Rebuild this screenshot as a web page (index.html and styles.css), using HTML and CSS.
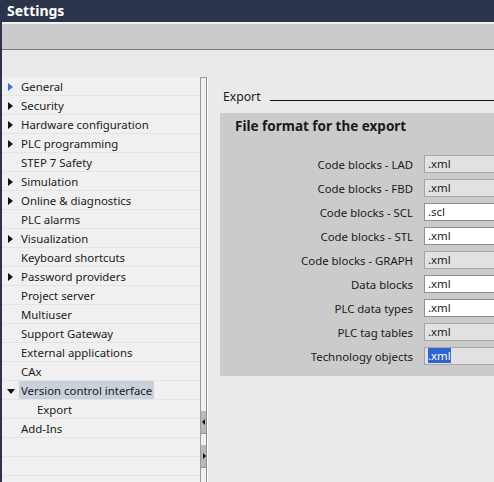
FILE: index.html
```html
<!DOCTYPE html>
<html lang="en">
<head>
    <meta charset="UTF-8">
    <title>Settings</title>
    <link rel="stylesheet" href="styles.css">
</head>
<body>
    <div class="titlebar">Settings</div>
    <div class="toolbar"></div>

    <div class="main">
        <ul class="nav">
            <li><span class="arrow blue"></span>General</li>
            <li><span class="arrow"></span>Security</li>
            <li><span class="arrow"></span>Hardware configuration</li>
            <li><span class="arrow"></span>PLC programming</li>
            <li>STEP 7 Safety</li>
            <li><span class="arrow"></span>Simulation</li>
            <li><span class="arrow"></span>Online &amp; diagnostics</li>
            <li>PLC alarms</li>
            <li><span class="arrow"></span>Visualization</li>
            <li>Keyboard shortcuts</li>
            <li><span class="arrow"></span>Password providers</li>
            <li>Project server</li>
            <li>Multiuser</li>
            <li>Support Gateway</li>
            <li>External applications</li>
            <li>CAx</li>
            <li><span class="arrow down"></span><span class="selected">Version control interface</span></li>
            <li class="sub">Export</li>
            <li>Add-Ins</li>
            <li></li>
            <li></li>
            <li></li>
        </ul>

        <div class="splitter">
            <div class="grip left"></div>
            <div class="grip right"></div>
        </div>

        <div class="content">
            <div class="section-title"><span>Export</span></div>
            <div class="group">
                <div class="group-title">File format for the export</div>
                <div class="row"><label>Code blocks - LAD</label><div class="field disabled">.xml</div></div>
                <div class="row"><label>Code blocks - FBD</label><div class="field disabled">.xml</div></div>
                <div class="row"><label>Code blocks - SCL</label><div class="field">.scl</div></div>
                <div class="row"><label>Code blocks - STL</label><div class="field">.xml</div></div>
                <div class="row"><label>Code blocks - GRAPH</label><div class="field disabled">.xml</div></div>
                <div class="row"><label>Data blocks</label><div class="field">.xml</div></div>
                <div class="row"><label>PLC data types</label><div class="field">.xml</div></div>
                <div class="row"><label>PLC tag tables</label><div class="field disabled">.xml</div></div>
                <div class="row"><label>Technology objects</label><div class="field disabled"><span class="sel">.xml</span></div></div>
            </div>
        </div>
    </div>
</body>
</html>
```

FILE: styles.css
```css
html, body { margin: 0; padding: 0; height: 100%; overflow: hidden; }
body { font-family: "Noto Sans", Arial, sans-serif; font-size: 11.4px; color: #1a1a1a; background: #eaeaea; border-left: 2px solid #2c344c; box-sizing: border-box; display: flex; flex-direction: column; }

.titlebar { height: 22px; line-height: 22px; background: #2c344c; color: #fff; font-weight: bold; font-size: 14px; padding-left: 5px; flex: none; }
.toolbar { height: 25px; background: #cbcbcb; border-top: 2px solid #f2f2f2; border-bottom: 1px solid #7a7a7a; flex: none; }

.main { display: flex; padding-top: 27px; flex: 1; min-height: 0; overflow: hidden; }

.nav { list-style: none; margin: 0; padding: 0; width: 198px; flex: none; }
.nav li { height: 18px; line-height: 20px; padding-left: 19px; background: #f0f0f0; border-bottom: 1px solid #e4e4e4; position: relative; white-space: nowrap; }
.nav li.sub { padding-left: 35px; }
.nav .selected { display: inline-block; height: 18px; background: #c9d1db; padding: 0 2px; margin-left: -2px; }

.arrow { position: absolute; left: 6px; top: 6px; width: 0; height: 0; border-top: 4px solid transparent; border-bottom: 4px solid transparent; border-left: 5px solid #111; }
.arrow.blue { border-left-color: #3b6fd6; }
.arrow.down { left: 5px; top: 8px; border-left: 4px solid transparent; border-right: 4px solid transparent; border-top: 5px solid #111; border-bottom: 0; }

.splitter { width: 5px; flex: none; background: #f0f0f0; border: 1px solid #9a9a9a; border-bottom: 0; border-right-color: #8c8c8c; box-shadow: 1px 0 0 #fff; padding-top: 333px; }
.grip { height: 22px; background: #b9b9b9; border-bottom: 1px solid #8c8c8c; position: relative; }
.grip.right { margin-top: 11px; }
.grip::after { content: ""; position: absolute; top: 8px; border-top: 3px solid transparent; border-bottom: 3px solid transparent; }
.grip.left::after { left: 1px; border-right: 3px solid #111; }
.grip.right::after { left: 2px; border-left: 3px solid #111; }

.content { flex: none; width: 320px; padding-left: 13px; }
.section-title { display: flex; align-items: center; height: 20px; margin-top: 9px; padding-left: 3px; }
.section-title span { font-size: 12.2px; }
.section-title::after { content: ""; flex: 1; border-bottom: 1px solid #111; margin: 8px 0 0 9px; }

.group { background: #cbcbcb; margin-top: 7px; height: 263px; }
.group-title { font-weight: bold; font-size: 13.5px; padding: 4px 0 0 15px; height: 35px; }
.row { display: flex; align-items: center; height: 24px; }
.row label { flex: none; width: 204px; text-align: right; padding-right: 11px; box-sizing: border-box; }
.field { flex: none; width: 100px; height: 16px; line-height: 16px; border: 1px solid #8f8f8f; background: #fff; padding-left: 3px; }
.field.disabled { background: #e2e2e2; border-color: #a3a3a3; }
.sel { background: #2f63d3; color: #fff; }
```
